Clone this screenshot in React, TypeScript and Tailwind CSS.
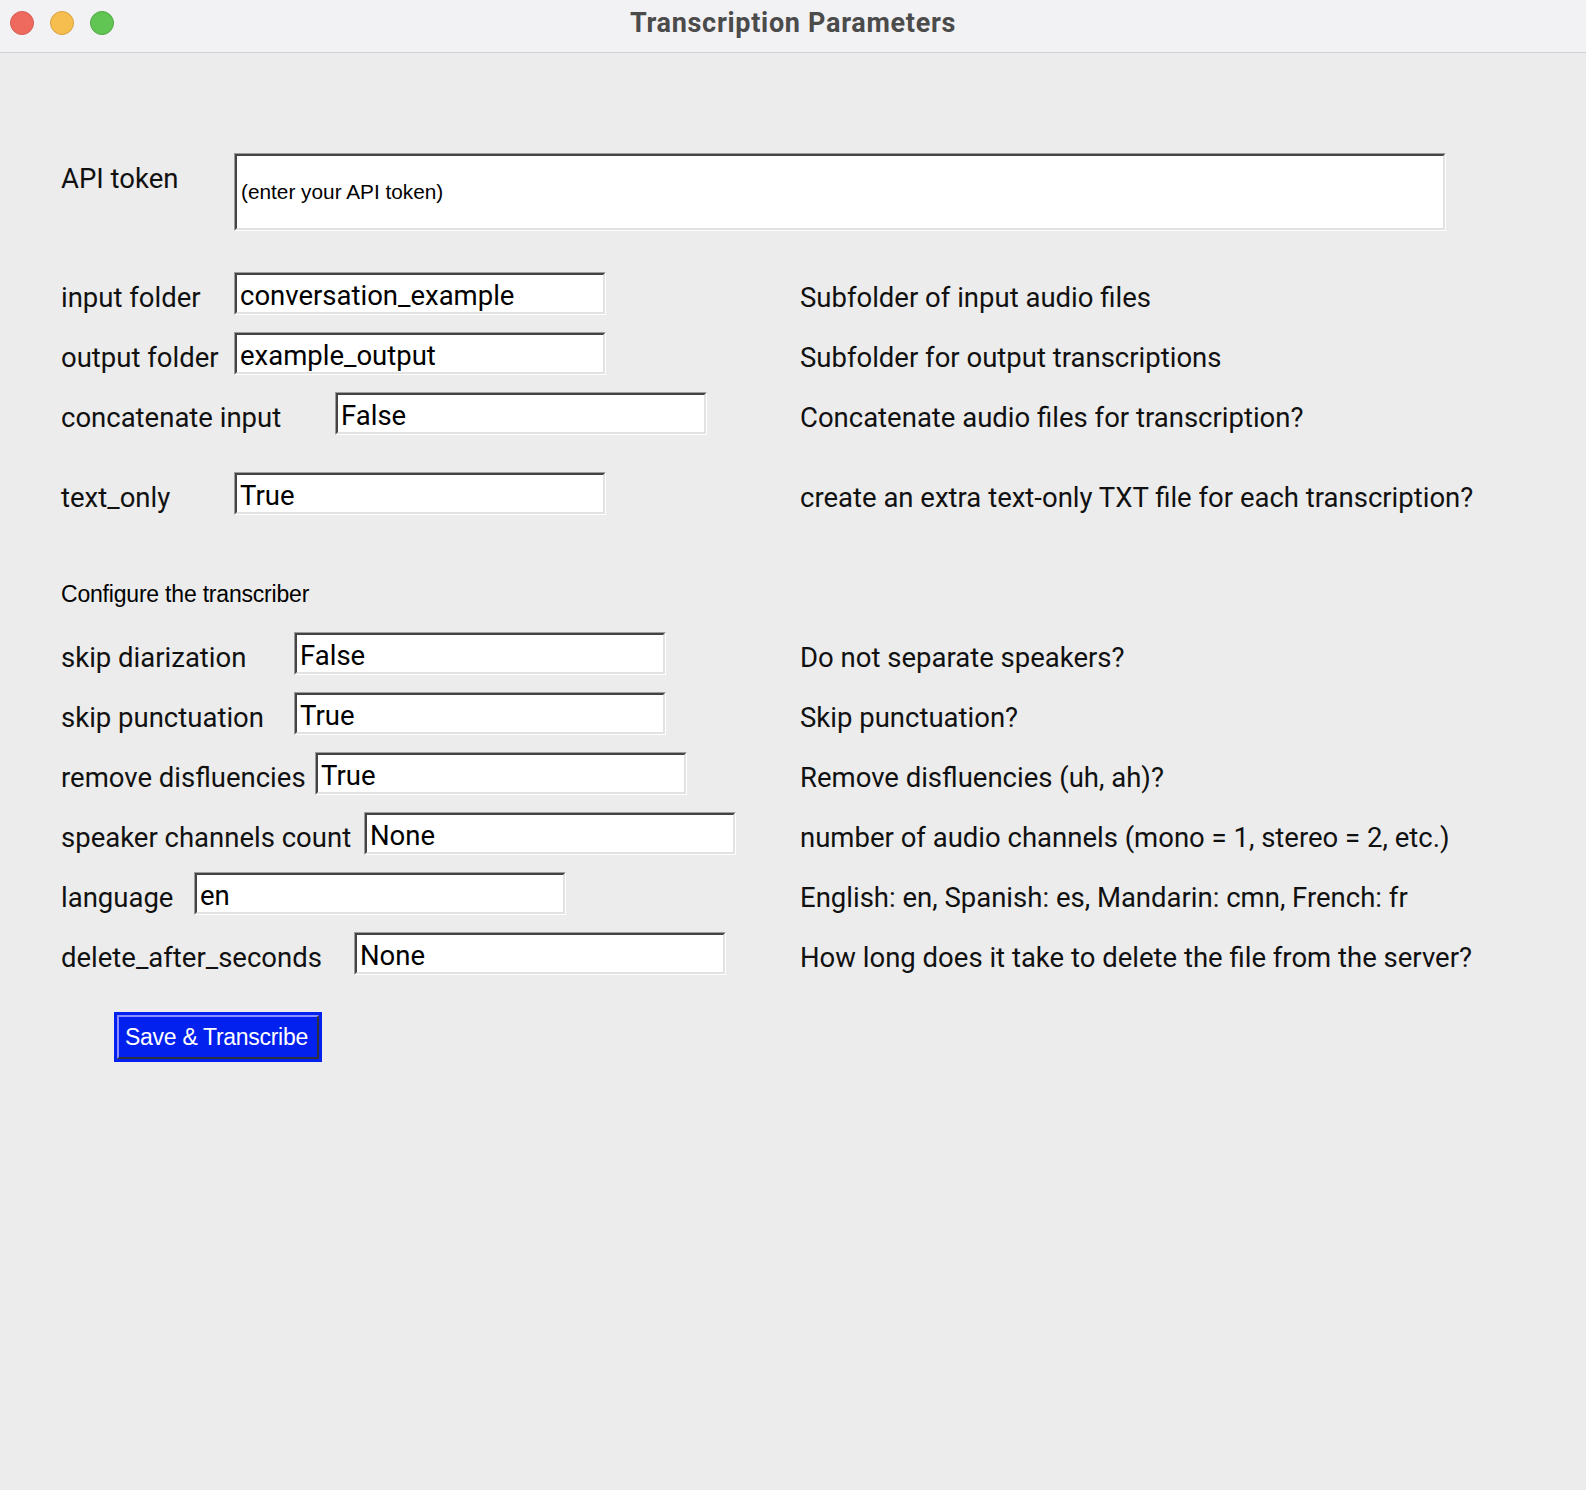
import React from 'react';

type Row = { label: string; value: string; hint: string; labelW: string; gap?: string };

const topRows: Row[] = [
  { label: 'input folder', value: 'conversation_example', hint: 'Subfolder of input audio files', labelW: 'w-[173px]' },
  { label: 'output folder', value: 'example_output', hint: 'Subfolder for output transcriptions', labelW: 'w-[173px]' },
  { label: 'concatenate input', value: 'False', hint: 'Concatenate audio files for transcription?', labelW: 'w-[274px]' },
  { label: 'text_only', value: 'True', hint: 'create an extra text-only TXT file for each transcription?', labelW: 'w-[173px]', gap: 'mt-[37px]' },
];

const configRows: Row[] = [
  { label: 'skip diarization', value: 'False', hint: 'Do not separate speakers?', labelW: 'w-[233px]' },
  { label: 'skip punctuation', value: 'True', hint: 'Skip punctuation?', labelW: 'w-[233px]' },
  { label: 'remove disfluencies', value: 'True', hint: 'Remove disfluencies (uh, ah)?', labelW: 'w-[254px]' },
  { label: 'speaker channels count', value: 'None', hint: 'number of audio channels (mono = 1, stereo = 2, etc.)', labelW: 'w-[303px]' },
  { label: 'language', value: 'en', hint: 'English: en, Spanish: es, Mandarin: cmn, French: fr', labelW: 'w-[133px]' },
  { label: 'delete_after_seconds', value: 'None', hint: 'How long does it take to delete the file from the server?', labelW: 'w-[293px]' },
];

const sf = "font-['Roboto','Liberation_Sans',sans-serif]";

// Tk-style sunken entry
const Entry: React.FC<{ value: string; className?: string; small?: boolean }> = ({ value, className = '', small }) => (
  <div className={`border border-t-[#9c9c9c] border-l-[#9c9c9c] border-b-white border-r-white ${className}`}>
    <input
      defaultValue={value}
      className={`w-full h-full bg-white outline-none border-2 border-t-[#444] border-l-[#444] border-b-[#e2e2e2] border-r-[#e2e2e2] ${
        small
          ? "pl-[4px] text-[20.8px] font-['Liberation_Sans',Arial,sans-serif]"
          : `pl-[3px] pt-[4px] text-[27.5px] ${sf}`
      } text-black`}
    />
  </div>
);

const FieldRow: React.FC<{ row: Row }> = ({ row }) => (
  <div className={`flex items-center h-[43px] ${row.gap ?? 'mt-[17px]'}`}>
    <div className="flex items-center w-[739px] shrink-0">
      <span className={`${row.labelW} shrink-0 pt-[8px] text-[27.5px] text-[#111] ${sf}`}>{row.label}</span>
      <Entry value={row.value} className="w-[372px] h-[43px]" />
    </div>
    <span className={`pt-[8px] text-[27.5px] text-[#111] whitespace-nowrap ${sf}`}>{row.hint}</span>
  </div>
);

export default function App() {
  return (
    <div className="w-[1586px] h-[1490px] bg-[#ececec] flex flex-col">
      <div className="relative h-[53px] bg-[#f2f2f4] border-b border-[#d3d3d3] flex items-center justify-center shrink-0">
        <div className="absolute left-[10px] top-[11px] flex gap-[16px]">
          <span className="w-[24px] h-[24px] rounded-full bg-[#ee6a5f] border border-[#d55b50]" />
          <span className="w-[24px] h-[24px] rounded-full bg-[#f6be4f] border border-[#d9a13f]" />
          <span className="w-[24px] h-[24px] rounded-full bg-[#61c554] border border-[#4fa842]" />
        </div>
        <span className={`pb-[6px] text-[27px] tracking-[0.7px] font-bold text-[#4b4b4b] ${sf}`}>Transcription Parameters</span>
      </div>

      <div className="pl-[61px] pt-[100px] flex flex-col">
        <div className="flex items-start h-[78px]">
          <span className={`w-[173px] shrink-0 mt-[5px] text-[27.5px] text-[#111] ${sf}`}>API token</span>
          <Entry value="(enter your API token)" small className="w-[1212px] h-[78px]" />
        </div>

        <div className="mt-[41px]" />
        {topRows.map((r, i) => (
          <FieldRow key={r.label} row={i === 0 ? { ...r, gap: 'mt-0' } : r} />
        ))}

        <div className="mt-[66px] h-[26px] leading-[26px] text-[23px] text-black font-['Liberation_Sans',Arial,sans-serif] tracking-[-0.2px]">
          Configure the transcriber
        </div>

        <div className="mt-[8px]" />
        {configRows.map((r) => (
          <FieldRow key={r.label} row={r} />
        ))}

        <div className="mt-[37px] ml-[53px] w-[208px] h-[50px] bg-[#0321ee] p-[3px]">
          <button className="w-full h-full pr-[3px] bg-[#0321ee] border-2 border-t-[#8a8cff] border-l-[#8a8cff] border-r-[#2e2f3c] border-b-[#2e2f3c] text-white text-[23px] tracking-[-0.3px] font-['Liberation_Sans',Arial,sans-serif] leading-none">
            Save &amp; Transcribe
          </button>
        </div>
      </div>
    </div>
  );
}
